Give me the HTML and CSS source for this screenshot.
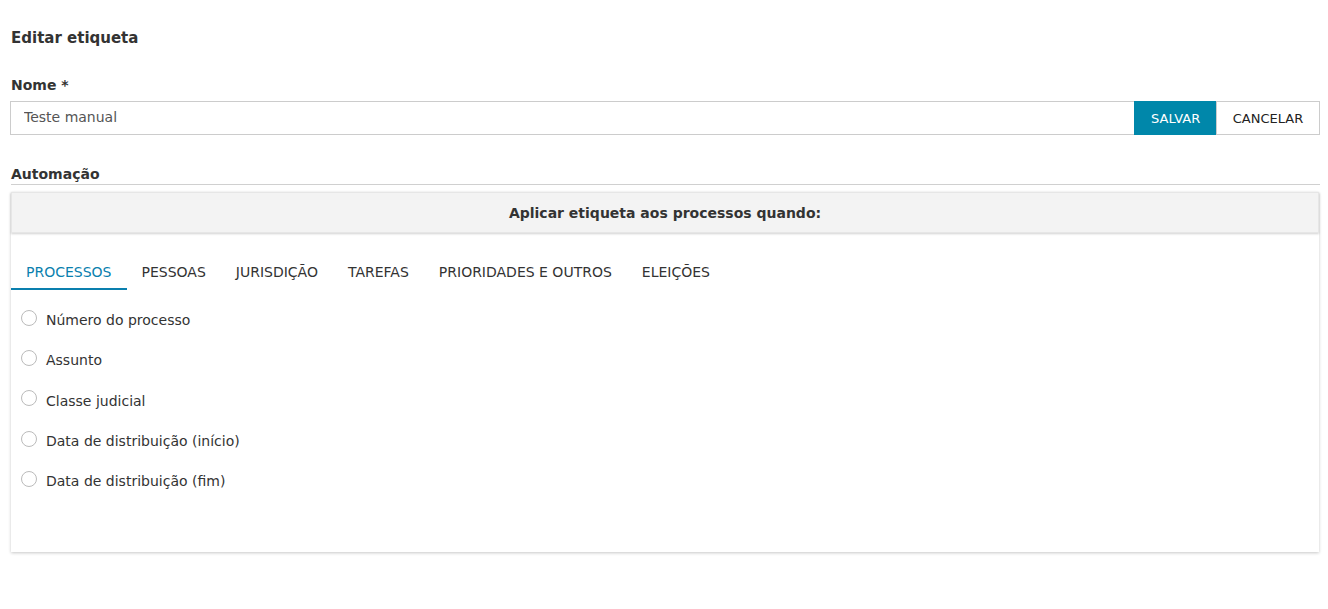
FILE: index.html
```html
<!DOCTYPE html>
<html lang="pt">
<head>
<meta charset="utf-8">
<link rel="stylesheet" href="styles.css">
</head>
<body>
<div class="page">
  <h1 class="title">Editar etiqueta</h1>
  <label class="label">Nome *</label>
  <div class="name-row">
    <input class="name-input" type="text" value="Teste manual">
    <button class="btn btn-primary">SALVAR</button>
    <button class="btn btn-default">CANCELAR</button>
  </div>
  <div class="section-label">Automação</div>
  <div class="card">
    <div class="card-header">Aplicar etiqueta aos processos quando:</div>
    <div class="card-body">
      <ul class="tabs">
        <li class="tab active">PROCESSOS</li>
        <li class="tab">PESSOAS</li>
        <li class="tab">JURISDIÇÃO</li>
        <li class="tab">TAREFAS</li>
        <li class="tab">PRIORIDADES E OUTROS</li>
        <li class="tab">ELEIÇÕES</li>
      </ul>
      <div class="options">
        <label class="option"><span class="radio"></span>Número do processo</label>
        <label class="option"><span class="radio"></span>Assunto</label>
        <label class="option"><span class="radio"></span>Classe judicial</label>
        <label class="option"><span class="radio"></span>Data de distribuição (início)</label>
        <label class="option"><span class="radio"></span>Data de distribuição (fim)</label>
      </div>
    </div>
  </div>
</div>
</body>
</html>
```

FILE: styles.css
```css
* { box-sizing: border-box; }
html, body { margin: 0; padding: 0; background: #fff; }
body {
  font-family: "DejaVu Sans", "Liberation Sans", sans-serif;
  font-size: 14px;
  color: #333;
}
.page {
  padding: 28px 8px 50px 10px;
}
.title {
  margin: 0 0 0 1px;
  font-size: 15px;
  font-weight: bold;
  line-height: 20px;
  color: #333;
}
.label {
  display: block;
  margin: 28px 0 0 1px;
  font-size: 14px;
  font-weight: bold;
  line-height: 18px;
}
.name-row {
  display: flex;
  margin-top: 7px;
  height: 34px;
}
.name-input {
  flex: 1;
  height: 34px;
  border: 1px solid #ccc;
  border-right: none;
  padding: 0 13px 2px 13px;
  font-family: inherit;
  font-size: 14px;
  color: #555;
  outline: none;
}
.btn {
  height: 34px;
  font-family: inherit;
  font-size: 13px;
  border: 1px solid #ccc;
  padding: 0 16px;
  cursor: pointer;
}
.btn-primary {
  background: #0087aa;
  color: #fff;
  border-color: #0087aa;
  width: 82px;
}
.btn-default {
  background: #fff;
  color: #222;
  width: 104px;
  padding: 0;
}
.section-label {
  margin-top: 30px;
  margin-left: 1px;
  font-weight: bold;
  font-size: 14px;
  line-height: 18px;
  padding-bottom: 1px;
  border-bottom: 1px solid #d0d0d0;
}
.card {
  margin: 7px 1px 0 1px;
  background: #fff;
  box-shadow: 0 1px 3px rgba(0,0,0,0.22);
  height: 360px;
}
.card-header {
  height: 41px;
  background: #f3f3f3;
  display: flex;
  align-items: center;
  justify-content: center;
  font-weight: bold;
  font-size: 14px;
  color: #333;
  box-shadow: 0 1px 2px rgba(0,0,0,0.18);
  border: 1px solid #e6e6e6;
}
.card-body {
  padding-top: 21px;
}
.tabs {
  display: flex;
  list-style: none;
  margin: 0;
  padding: 0;
}
.tab {
  padding: 9px 15px 7px 15px;
  line-height: 18px;
  font-size: 14px;
  color: #333;
  border-bottom: 2px solid transparent;
}
.tab.active {
  color: #0a7fae;
  border-bottom-color: #0a7fae;
}
.options {
  padding: 10px 0 0 10px;
}
.option {
  display: flex;
  align-items: center;
  height: 40.3px;
  line-height: 18px;
  color: #333;
}
.option .radio {
  width: 16px;
  height: 16px;
  border: 1px solid #bbb;
  border-radius: 50%;
  margin-right: 9px;
  margin-top: -5px;
  background: #fff;
}
```
